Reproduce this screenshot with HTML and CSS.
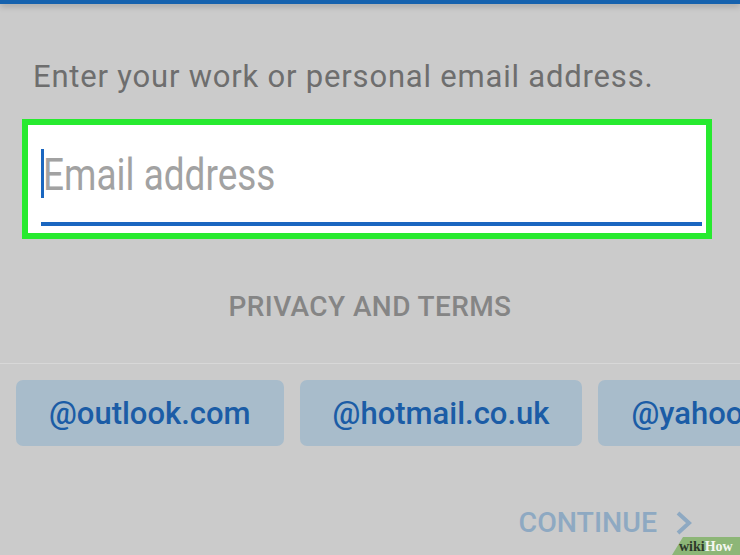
FILE: index.html
```html
<!DOCTYPE html>
<html lang="en">
<head>
    <meta charset="UTF-8">
    <meta name="viewport" content="width=device-width, initial-scale=1.0">
    <title>Add account</title>
    <link rel="stylesheet" href="styles.css">
</head>
<body>
    <div class="screen">
        <div class="topbar"></div>
        <p class="intro">Enter your work or personal email address.</p>
        <div class="field">
            <div class="input-row">
                <span class="cursor"></span>
                <span class="placeholder">Email address</span>
            </div>
            <div class="underline"></div>
        </div>
        <p class="privacy">PRIVACY AND TERMS</p>
        <div class="divider"></div>
        <div class="chips">
            <button class="chip">@outlook.com</button>
            <button class="chip">@hotmail.co.uk</button>
            <button class="chip">@yahoo.com</button>
        </div>
        <div class="actions">
            <span class="continue">CONTINUE</span>
            <svg class="chevron" width="18" height="24" viewBox="0 0 18 24">
                <polyline points="3,2 14,12 3,22" fill="none" stroke="#8ea9c2" stroke-width="4"/>
            </svg>
        </div>
        <div class="badge"><span class="wiki">wiki</span><span class="how">How</span></div>
    </div>
</body>
</html>
```

FILE: styles.css
```css
*{
    margin: 0;
    padding: 0;
    box-sizing: border-box;
}
body{
    font-family: Roboto, "Noto Sans", sans-serif;
    background-color: #cbcbcb;
}

.screen{
    position: relative;
    width: 740px;
    height: 555px;
    overflow: hidden;
}

.topbar{
    height: 4px;
    background-color: #1662ae;
    box-shadow: 0 2px 6px rgba(0, 0, 0, 0.25);
}

.intro{
    margin: 55px 0 0 33px;
    font-size: 31px;
    line-height: 36px;
    letter-spacing: 0.8px;
    color: #6e6e6e;
    white-space: nowrap;
}

.field{
    margin: 24px 0 0 22px;
    width: 690px;
    height: 120px;
    border: 6px solid #27ea2f;
    background-color: white;
    padding: 24px 4px 0 13px;
}
.input-row{
    display: flex;
    align-items: center;
    height: 49px;
}
.cursor{
    flex-shrink: 0;
    width: 3px;
    height: 49px;
    background-color: #1a66c0;
}
.placeholder{
    margin-left: -1px;
    padding-top: 4px;
    font-size: 44px;
    line-height: 49px;
    color: #a2a2a2;
    white-space: nowrap;
    transform: scaleX(0.84);
    transform-origin: left center;
}
.underline{
    margin-top: 24px;
    height: 4px;
    background-color: #1a66c0;
}

.privacy{
    margin-top: 51px;
    text-align: center;
    font-size: 28px;
    line-height: 34px;
    letter-spacing: 0.4px;
    font-weight: 500;
    color: #858585;
}

.divider{
    margin-top: 39px;
    height: 1px;
    background-color: #d8d8d8;
}

.chips{
    display: flex;
    gap: 16px;
    margin: 16px 0 0 16px;
}
.chip{
    flex-shrink: 0;
    height: 66px;
    padding: 0 33px;
    border: none;
    border-radius: 7px;
    background-color: #a8bccb;
    font-family: inherit;
    font-size: 31px;
    font-weight: 500;
    color: #1b5ca6;
}

.actions{
    display: flex;
    justify-content: flex-end;
    align-items: center;
    gap: 18px;
    margin-top: 60px;
    padding-right: 47px;
}
.continue{
    font-size: 28.5px;
    line-height: 34px;
    font-weight: 500;
    color: #8ea9c2;
}

.badge{
    position: absolute;
    right: 0;
    bottom: 0;
    width: 68px;
    height: 18px;
    padding-left: 7px;
    background-color: #8db677;
    clip-path: polygon(11px 0, 100% 0, 100% 100%, 0 100%);
    font-family: "Liberation Serif", serif;
    font-size: 14px;
    font-weight: bold;
    line-height: 19px;
    white-space: nowrap;
}
.wiki{
    color: #2e3a2a;
}
.how{
    color: #f4f7f1;
}
```
